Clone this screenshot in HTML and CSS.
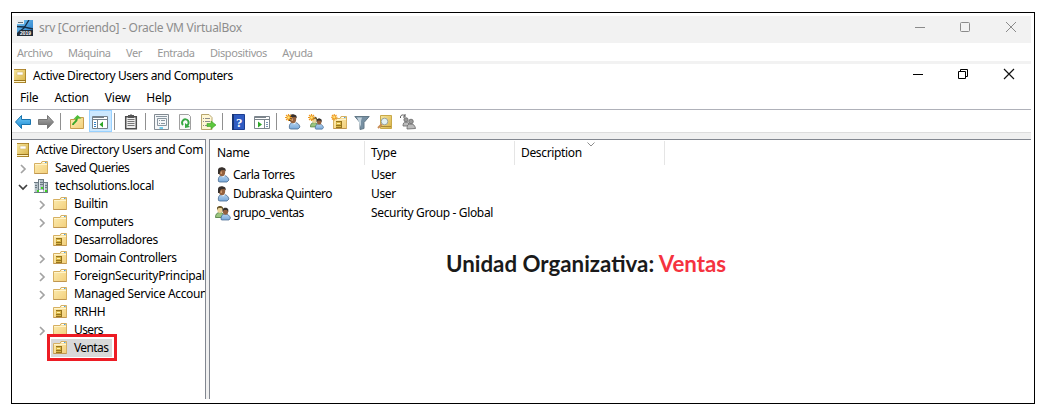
FILE: index.html
```html
<!DOCTYPE html>
<html lang="es">
<head>
<meta charset="utf-8">
<title>srv [Corriendo] - Oracle VM VirtualBox</title>
<link rel="stylesheet" href="styles.css">
</head>
<body>
<svg class="defs" width="0" height="0">
  <defs>
    <linearGradient id="gold" x1="0" y1="0" x2="1" y2="1"><stop offset="0" stop-color="#fdedb3"/><stop offset="1" stop-color="#f2cf7b"/></linearGradient>
    <linearGradient id="book" x1="0" y1="0" x2="1" y2="1"><stop offset="0" stop-color="#f7e79f"/><stop offset="1" stop-color="#d8b144"/></linearGradient>
    <linearGradient id="shirt" x1="0" y1="0" x2="0" y2="1"><stop offset="0" stop-color="#b4d3ef"/><stop offset="1" stop-color="#79a9da"/></linearGradient>
    <linearGradient id="blue" x1="0" y1="0" x2="0" y2="1"><stop offset="0" stop-color="#7cd0f8"/><stop offset="1" stop-color="#1687d3"/></linearGradient>
    <linearGradient id="gray" x1="0" y1="0" x2="0" y2="1"><stop offset="0" stop-color="#b0b0b0"/><stop offset="1" stop-color="#666"/></linearGradient>
    <linearGradient id="sky" x1="0" y1="0" x2="1" y2="1"><stop offset="0" stop-color="#7cc9f3"/><stop offset="1" stop-color="#1a72c4"/></linearGradient>
  </defs>
  <symbol id="i-book" viewBox="0 0 16 16"><path fill="url(#book)" d="M2 1h12v14H2z"/><path fill="#b28a35" d="M2 1h12v1H2z"/><path fill="#9a741c" d="M2 12h12v1H2zM2 14.300h12v.7H2zM13.300 1h.7v14h-.7z"/><path fill="#fff3c4" d="M2 13h11v1H2z"/><path fill="#fff" stroke="#d5bb70" stroke-width=".6" d="M5 4h6v3H5z"/></symbol>
  <symbol id="i-folder" viewBox="0 0 16 16"><path fill="url(#gold)" stroke="#d6b062" d="M1.500 3.500H8l1-2h5.500v12h-13z"/><path fill="#fff" d="M9.500 2h4v1h-4z"/><path fill="#49a0df" d="M12 2h1.500v1H12z"/><path fill="#fff4cc" d="M2 4h12v1H2z"/><path fill="#c09650" d="M1.500 13h13v1h-13z"/></symbol>
  <symbol id="i-ou" viewBox="0 0 16 16"><use href="#i-folder"/><path fill="#d9b545" d="M4 6h6v7H4z"/><path fill="#96741c" d="M4 6h6v1H4zM4 12h6v1H4zM9 6h1v7H9zM4 10h5v1H4z"/><path fill="#fff1a8" d="M5 8h3v1H5z"/></symbol>
  <symbol id="i-domain" viewBox="0 0 16 16"><path fill="#b4bfc6" d="M5 1h6v11H5zM1 4h5v11H1zM10 4h5v11h-5z"/><path fill="#6d7b84" d="M5 1h6v1H5zM1 4h4v1H1zM11 4h4v1h-4zM5 2h1v10H5zM10 2h1v10h-1zM14 5h1v10h-1zM1 14h14v1H1zM7 4h3v1H7zM7 6h3v1H7zM2 7h2v1H2zM2 9h2v1H2zM11 7h3v1h-3zM11 9h3v1h-3z"/><path fill="#e6edf0" d="M6 2h1v9H6zM1 5h1v9H1zM11 5h1v9h-1z"/><path fill="#3fd524" d="M8 9h2v2H8zM4 12h2v2H4zM12 12h2v2h-2z"/></symbol>
  <symbol id="i-user" viewBox="0 0 16 16"><path fill="url(#shirt)" stroke="#47698f" stroke-width=".8" d="M3.500 14.500c-.7-4 1-6.200 4.500-6.200 3 0 5 1.500 6 4.700l-2 2H5z"/><path fill="#ecf4fa" d="m6 8 2 2.500L10.500 8z"/><ellipse cx="7" cy="5" rx="3.200" ry="4.200" fill="#94623f"/><path fill="#38312d" d="M3 7V2.800C3.500.4 6 0 8 .4c2.400.2 3 1.900 2.700 4.200L9.500 3l-3.500.3L4.500 7z"/><path fill="#d19b70" d="M5.500 4.500H7V7H5.500z"/></symbol>
  <symbol id="i-group" viewBox="0 0 16 16"><path fill="#9bc580" stroke="#49783a" stroke-width=".8" d="M.5 12.500c0-3.500 1.500-5 4.500-5s4 2 4 5z"/><ellipse cx="5" cy="4.500" rx="2.800" ry="3.400" fill="#ead39a"/><path fill="#6b592f" d="M2 5V2.500C3 .4 7 .3 8 2.500V5L6.500 3h-3z"/><path fill="url(#shirt)" stroke="#3f618a" stroke-width=".7" d="M6 14.500c0-3.500 1-5.500 4-5.500s4.500 1.500 5.500 4L14 15H7z"/><ellipse cx="10.500" cy="6.500" rx="2.600" ry="3.300" fill="#94623f"/><path fill="#34302d" d="M7.500 7V4.500c.8-2.300 5-2.300 5.800 0V7L12 5H9z"/></symbol>
  <symbol id="i-star" viewBox="0 0 16 16"><path stroke="#ee9a20" stroke-width="1.400" d="M4 0v8M0 4h8M1.200 1.200l5.600 5.600M6.800 1.200 1.200 6.800"/><circle cx="4" cy="4" r="1.400" fill="#ffe477"/></symbol>
  <symbol id="i-chevron" viewBox="0 0 8 10"><path fill="none" stroke="#a3a3a3" stroke-width="1.700" d="m2 1 4 4-4 4"/></symbol>
  <symbol id="i-open" viewBox="0 0 10 8"><path fill="none" stroke="#404040" stroke-width="1.700" d="m1 2 4 4 4-4"/></symbol>
</svg>

<main class="frame">
  <div class="screen">
    <header class="vm-title">
      <svg class="vm-icon" width="16" height="16" viewBox="0 0 16 16"><path fill="url(#sky)" d="M0 0h16v16H0z"/><path fill="#e6edf1" d="M0 0h7v4H0z"/><path stroke="#66747e" d="M1 2.500h5"/><path fill="none" stroke="#152f48" stroke-width="1.300" d="M0 6.500 7 7l9 2M12 0 7 8l-4 3"/><path fill="#202c38" d="M3 10h13v6H0v-3z"/><text x="3" y="14.800" class="vm-year">2019</text></svg>
      <span class="vm-name">srv [Corriendo] - Oracle VM VirtualBox</span>
      <svg class="controls" width="112" height="27" viewBox="0 0 112 27"><path fill="none" stroke="#8b8b8b" d="M6 11.500h10"/><rect x="51.500" y="6.500" width="9" height="9" rx="1" fill="none" stroke="#8b8b8b"/><path stroke="#8b8b8b" d="m97 6 10 10M107 6 97 16"/></svg>
    </header>
    <nav class="vm-menu"><span>Archivo</span><span>Máquina</span><span>Ver</span><span>Entrada</span><span>Dispositivos</span><span>Ayuda</span></nav>

    <header class="app-title">
      <svg width="16" height="16"><use href="#i-book"/></svg>
      <span class="app-name">Active Directory Users and Computers</span>
      <svg class="controls" width="118" height="23" viewBox="0 0 118 23"><path stroke="#000" d="M0 10.500h10"/><path fill="none" stroke="#000" d="M45.500 7.500h7v7h-7zM47.500 7V5.500h7v7H53"/><path stroke="#111" stroke-width="1.200" d="m91 5 10 10M101 5 91 15"/></svg>
    </header>
    <nav class="app-menu"><span>File</span><span>Action</span><span>View</span><span>Help</span></nav>

    <div class="toolbar">
      <i class="tool"><svg viewBox="0 0 16 16"><path fill="url(#blue)" stroke="#1974ae" d="m.5 8 6-6.500v4h9v5h-9v4z"/></svg></i>
      <i class="tool"><svg viewBox="0 0 16 16"><path fill="url(#gray)" stroke="#777" d="m15.500 8-6-6.500v4h-9v5h9v4z"/></svg></i>
      <i class="sep"></i>
      <i class="tool"><svg viewBox="0 0 16 16"><path fill="url(#gold)" stroke="#c89c4d" d="M1.500 5.500H7l1-2h6.500v11h-13z"/><path fill="none" stroke="#3aa62c" stroke-width="2" d="M4 11c0-3 4-2 4-7"/><path fill="#4fbd38" d="m4.500 5 4-4 4 3.500z"/></svg></i>
      <i class="tool active"><svg viewBox="0 0 16 16"><path fill="#fff" stroke="#77818a" d="M.5 2.500h15v12H.5zM0 5.500h16M5.500 6v9"/><path stroke="#77818a" d="M1 3.500h11"/><path stroke="#3282c6" d="M2 8.500h2M2 10.500h2M2 12.500h2"/><path fill="#2da628" d="m7.500 10.500 3.500-3v6z"/></svg></i>
      <i class="sep"></i>
      <i class="tool"><svg viewBox="0 0 16 16"><path fill="#eee" stroke="#4d4d4d" stroke-width="1.500" d="M2.700 2.700h10.600v12H2.700z"/><path fill="#555" d="M5 1h2l1-1 1 1h2v3H5z"/><path stroke="#777" d="M4.500 5.500h7M4.500 7.500h7M4.500 9.500h7M4.500 11.500h7"/></svg></i>
      <i class="sep"></i>
      <i class="tool"><svg viewBox="0 0 16 16"><path fill="#f5f7f9" stroke="#838b92" d="M.5.500h14v15H.5z"/><path fill="none" stroke="#8996a0" d="M2 2.500h11M3.500 4.500h9v7h-9zM5 6.500h1M7 6.500h4M5 9.500h1M7 9.500h4"/><path stroke="#43bfe8" stroke-width="1.500" d="M5.500 14H9"/></svg></i>
      <i class="tool"><svg viewBox="0 0 16 16"><path fill="#fafafa" stroke="#a0a0a0" d="M2.500.5h9l2 2v13h-11z"/><path fill="none" stroke="#38a844" stroke-width="2" d="M6 11a3.300 3.300 0 1 1 4 .5"/><path fill="#38a844" d="M8 9v5l5-1z"/></svg></i>
      <i class="tool"><svg viewBox="0 0 16 16"><path fill="#fff7d4" stroke="#b7a66e" d="M1.500.5H9l3 3v12H1.500z"/><path stroke="#8b8b8b" d="M3 4.500h1M5 4.500h5M3 7.500h1M5 7.500h5M3 11.500h1M5 11.500h4"/><path fill="#5dc83d" stroke="#3d9f27" stroke-width=".6" d="M7 9.500h4V7l5 4-5 4v-2.500H7z"/></svg></i>
      <i class="sep"></i>
      <i class="tool"><svg viewBox="0 0 16 16"><path fill="#305cc2" stroke="#1d3e91" d="M1.500.5h12v15h-12z"/><path fill="#183574" d="M1 0h2v16H1z"/><text x="5" y="12.500" class="help-mark">?</text></svg></i>
      <i class="tool"><svg viewBox="0 0 16 16"><path fill="#fff" stroke="#7c858c" d="M.5 2.500h15v12H.5zM0 5.500h16M10.500 6v9M1 3.500h11"/><path fill="#2da628" d="M4 7.500v6l4-3z"/><path stroke="#7893b4" d="M12 8.500h2M12 10.500h2M12 12.500h2"/></svg></i>
      <i class="sep"></i>
      <i class="tool"><svg viewBox="0 0 16 16"><use href="#i-user" x="1" width="16" height="16"/><use href="#i-star" width="14" height="14"/></svg></i>
      <i class="tool"><svg viewBox="0 0 16 16"><use href="#i-group" x="2" y="2" width="14" height="14"/><use href="#i-star" width="14" height="14"/></svg></i>
      <i class="tool"><svg viewBox="0 0 16 16"><use href="#i-ou" x="1" y="1" width="16" height="16"/><use href="#i-star" width="13" height="13"/></svg></i>
      <i class="tool"><svg viewBox="0 0 16 16"><path fill="#7790a3" stroke="#647987" d="M.8 2.500h14.400L10 8.500v6l-4 1v-7z"/><path fill="#c3d3dd" d="M3 3.500h5L7 7v6z"/></svg></i>
      <i class="tool"><svg viewBox="0 0 16 16"><path fill="url(#book)" stroke="#c9a949" d="M3.500 1.500h11v13h-11z"/><path stroke="#a88937" d="M4 12.500h10"/><path stroke="#c98d55" stroke-width="2" d="m1 14 4-4"/><circle cx="7.500" cy="7.500" r="3.300" fill="#e3f1f3" stroke="#9aa39d"/></svg></i>
      <i class="tool"><svg viewBox="0 0 16 16"><g fill="#bbb" stroke="#666" stroke-width=".8"><path d="M3 12c0-3 1-4 3-4s3 1 3 4z"/><circle cx="6" cy="5.800" r="2.100" fill="#999"/><path d="M7 15c0-4 1-5 4-5s4 2 4.500 4.500z"/><circle cx="11" cy="7.500" r="2.300" fill="#999"/></g><path fill="none" stroke="#555" d="M.5 4C0 1 3 0 5 2M5 0v3H3"/></svg></i>
    </div>

    <div class="panes">
      <aside class="tree">
        <div class="node root"><svg width="16" height="16"><use href="#i-book"/></svg><span class="t-root">Active Directory Users and Com</span></div>
        <div class="node top"><svg class="arrow" width="8" height="10"><use href="#i-chevron"/></svg><svg width="16" height="16"><use href="#i-folder"/></svg><span>Saved Queries</span></div>
        <div class="node top"><svg class="arrow open" width="10" height="8"><use href="#i-open"/></svg><svg width="16" height="16"><use href="#i-domain"/></svg><span class="t-domain">techsolutions.local</span></div>
        <div class="node child"><svg class="arrow" width="8" height="10"><use href="#i-chevron"/></svg><svg width="16" height="16"><use href="#i-folder"/></svg><span>Builtin</span></div>
        <div class="node child"><svg class="arrow" width="8" height="10"><use href="#i-chevron"/></svg><svg width="16" height="16"><use href="#i-folder"/></svg><span>Computers</span></div>
        <div class="node child leaf"><svg width="16" height="16"><use href="#i-ou"/></svg><span class="t-dev">Desarrolladores</span></div>
        <div class="node child"><svg class="arrow" width="8" height="10"><use href="#i-chevron"/></svg><svg width="16" height="16"><use href="#i-ou"/></svg><span class="t-dc">Domain Controllers</span></div>
        <div class="node child"><svg class="arrow" width="8" height="10"><use href="#i-chevron"/></svg><svg width="16" height="16"><use href="#i-folder"/></svg><span class="t-fsp">ForeignSecurityPrincipals</span></div>
        <div class="node child"><svg class="arrow" width="8" height="10"><use href="#i-chevron"/></svg><svg width="16" height="16"><use href="#i-folder"/></svg><span>Managed Service Accounts</span></div>
        <div class="node child leaf"><svg width="16" height="16"><use href="#i-ou"/></svg><span>RRHH</span></div>
        <div class="node child"><svg class="arrow" width="8" height="10"><use href="#i-chevron"/></svg><svg width="16" height="16"><use href="#i-folder"/></svg><span class="t-sel">Users</span></div>
        <div class="node child leaf selected"><svg width="16" height="16"><use href="#i-ou"/></svg><span class="t-sel">Ventas</span><b class="marker"></b></div>
      </aside>
      <section class="list">
        <div class="head"><span class="c-name">Name</span><span class="c-type">Type</span><span class="c-desc">Description<svg class="sort" width="8" height="5" viewBox="0 0 8 5"><path fill="none" stroke="#8d8d8d" d="m.5.500 3.500 3.500L7.500.5"/></svg></span></div>
        <div class="row"><svg width="16" height="16"><use href="#i-user"/></svg><span class="r-name">Carla Torres</span><span>User</span></div>
        <div class="row"><svg width="16" height="16"><use href="#i-user"/></svg><span class="r-name">Dubraska Quintero</span><span>User</span></div>
        <div class="row"><svg width="16" height="16"><use href="#i-group"/></svg><span class="r-name">grupo_ventas</span><span>Security Group - Global</span></div>
        <h1 class="caption">Unidad Organizativa: <em>Ventas</em></h1>
      </section>
    </div>
  </div>
</main>
</body>
</html>
```

FILE: styles.css
```css
* { box-sizing: border-box; }
body { margin: 0; height: 416px; overflow: hidden; background: #fff; color: #000; padding: 12px 0 0 11px; font: 12px/18px "Noto Sans", "Open Sans", sans-serif; letter-spacing: -.35px; white-space: nowrap; }
svg { display: block; flex: none; }
.defs { position: absolute; }
.frame { width: 1024px; height: 392px; border: 1px solid #000; padding-top: 3px; }
.screen { width: 1019px; }
.vm-title { height: 27px; display: flex; align-items: center; background: #f2f2f2; color: #8d8d8d; padding: 0 10px 3px 5px; }
.vm-name { margin-left: 6px; letter-spacing: -.28px; }
.vm-year { font: bold 5px "Liberation Sans", sans-serif; fill: #fff; letter-spacing: 0; }
.controls { margin-left: auto; }
.vm-title .controls { align-self: flex-start; }
.vm-menu { height: 21px; display: flex; gap: 15.4px; padding-left: 5px; line-height: 20px; font-size: 11px; color: #999; border-bottom: 3px solid #f2f2f2; letter-spacing: -.42px; }
.app-title { height: 23px; display: flex; align-items: center; }
.app-name { margin-left: 5px; letter-spacing: -.4px; }
.app-title .controls { align-self: flex-start; }
.app-menu { height: 23px; display: flex; gap: 16px; padding: 2px 0 0 8px; border-bottom: 1px solid #afb1b9; letter-spacing: -.2px; }
.toolbar { height: 29px; display: flex; background: linear-gradient(#fff 22px, #ddd 22px, #ddd 23px, #f0f0f0 23px); }
.tool { width: 23px; height: 22px; padding: 4px 4px 0 3px; }
.tool svg { width: 16px; height: 16px; }
.active { background: #cce8ff; box-shadow: inset 0 0 0 1px #99d1ff; }
.help-mark { font: bold 13px "Liberation Serif", serif; fill: #fff; }
.sep { width: 8px; padding: 3px 0 0 2px; }
.sep::before { content: ""; display: block; width: 1px; height: 17px; background: #909090; }
.panes { height: 260px; display: flex; gap: 3px; background: #f0f0f0; }
.tree { width: 194px; border: solid #828790; border-width: 1px 1px 0 0; padding-top: 1px; overflow: hidden; background: #fff; }
.node { height: 18px; display: flex; align-items: center; }
.node > span { margin-left: 6px; }
.root { padding-left: 3px; }
.node.root > span { margin-left: 5px; }
.node.top { padding-left: 7px; }
.node.top > span { margin-left: 6px; letter-spacing: -.5px; }
.node.top > .t-domain { letter-spacing: -.3px; }
.child { padding-left: 26px; }
.arrow { margin-right: 6px; position: relative; top: 1px; }
.open { margin: 0 5px 0 -1px; }
.leaf { padding-left: 40px; }
.t-dev { letter-spacing: -.4px; }
.t-dc { letter-spacing: -.4px; }
.t-fsp { letter-spacing: -.25px; }
.t-sel { letter-spacing: -.6px; }
.selected { position: relative; width: 61px; margin-left: 39px; padding-left: 1px; background: #d9d9d9; }
.marker { position: absolute; left: -4px; top: -5px; width: 70px; height: 27px; border: 3px solid #ed1c24; }
.list { flex: 1; border: solid #828790; border-width: 1px 0 0 1px; background: #fff; }
.head { height: 25px; display: flex; padding-top: 1px; line-height: 24px; }
.head span { border-right: 1px solid #e5e5e5; padding-left: 6px; width: 150px; position: relative; }
.head .c-name { width: 155px; padding-left: 7px; }
.sort { position: absolute; left: 72px; top: 1px; }
.row { height: 19px; display: flex; align-items: center; padding-left: 5px; }
.r-name { width: 138px; margin-left: 2px; letter-spacing: -.5px; }
.caption { margin: 25px 0 0 236px; font: bold 22.300px/34px Lato, sans-serif; color: #1a1a1a; letter-spacing: 0; }
.caption em { font-style: normal; color: #f5333f; }
```
